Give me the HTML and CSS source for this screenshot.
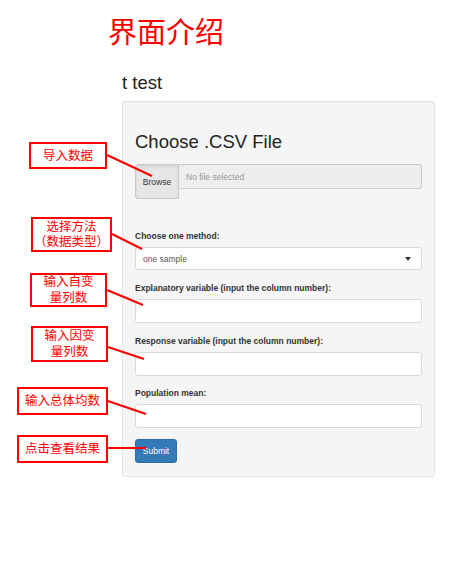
FILE: index.html
```html
<!DOCTYPE html>
<html lang="zh">
<head>
<meta charset="utf-8">
<title>界面介绍</title>
<link rel="stylesheet" href="styles.css">
</head>
<body>
<div class="page">
  <h1 class="intro-title">界面介绍</h1>
  <div class="app">
    <h2 class="app-title">t test</h2>
    <div class="well">
      <h2 class="well-title">Choose .CSV File</h2>
      <div class="file-row">
        <span class="browse">Browse</span>
        <span class="file-name">No file selected</span>
      </div>
      <div class="group first">
        <div class="label">Choose one method:</div>
        <div class="select"><span>one sample</span><span class="caret"></span></div>
      </div>
      <div class="group">
        <div class="label">Explanatory variable (input the column number):</div>
        <div class="input"></div>
      </div>
      <div class="group">
        <div class="label">Response variable (input the column number):</div>
        <div class="input"></div>
      </div>
      <div class="group tight">
        <div class="label">Population mean:</div>
        <div class="input"></div>
      </div>
      <div class="submit">Submit</div>
    </div>
  </div>

  <svg class="lines" width="454" height="567" viewBox="0 0 454 567">
    <g stroke="#ff0000" stroke-width="2" stroke-linecap="butt">
      <line x1="107" y1="155" x2="152" y2="176"/>
      <line x1="112" y1="234" x2="142" y2="249"/>
      <line x1="107" y1="290" x2="143" y2="305"/>
      <line x1="108" y1="347" x2="144" y2="359"/>
      <line x1="108" y1="401" x2="146" y2="414"/>
      <line x1="108" y1="448" x2="146" y2="448"/>
    </g>
  </svg>

  <div class="note n1">导入数据</div>
  <div class="note n2"><span>选择方法</span><span>（数据类型）</span></div>
  <div class="note n3"><span>输入自变</span><span>量列数</span></div>
  <div class="note n4"><span>输入因变</span><span>量列数</span></div>
  <div class="note n5">输入总体均数</div>
  <div class="note n6">点击查看结果</div>
</div>
</body>
</html>
```
FILE: styles.css
```css
html, body {
  margin: 0;
  padding: 0;
  background: #ffffff;
}

.page {
  position: relative;
  width: 454px;
  height: 567px;
  overflow: hidden;
  font-family: "Liberation Sans", Arial, sans-serif;
  color: #333333;
}

.intro-title {
  margin: 0;
  padding: 16px 0 0 108px;
  font-family: "Noto Sans CJK SC", sans-serif;
  font-weight: 400;
  font-size: 29px;
  line-height: 29px;
  color: #ff0000;
}

.app {
  margin: 28px 0 0 122px;
  width: 313px;
}

.app-title {
  margin: 0 0 8px 0;
  font-size: 18.5px;
  line-height: 20px;
  font-weight: 400;
  color: #222222;
}

.well {
  background: #f5f5f5;
  border: 1px solid #e3e3e3;
  border-radius: 3px;
  padding: 12px 12px 13px 12px;
  box-shadow: inset 0 1px 1px rgba(0,0,0,0.03);
}

.well-title {
  margin: 18px 0 0 0;
  font-size: 18.5px;
  line-height: 20px;
  font-weight: 400;
  color: #222222;
}

.file-row {
  display: flex;
  align-items: flex-start;
  margin-top: 12px;
}

.browse {
  box-sizing: border-box;
  width: 44px;
  height: 35px;
  display: flex;
  align-items: center;
  justify-content: center;
  background: #e6e6e6;
  border: 1px solid #c8c8c8;
  border-radius: 3px 0 0 3px;
  font-size: 8.5px;
  color: #333333;
  box-shadow: inset 0 2px 3px rgba(0,0,0,0.08);
}

.file-name {
  box-sizing: border-box;
  flex: 1;
  height: 25px;
  display: flex;
  align-items: center;
  padding-left: 7px;
  background: #eeeeee;
  border: 1px solid #cccccc;
  border-left: none;
  border-radius: 0 3px 3px 0;
  font-size: 8.5px;
  color: #999999;
}

.group {
  margin-top: 13px;
}

.group.first {
  margin-top: 32px;
}

.group.tight {
  margin-top: 12px;
}

.label {
  font-size: 8.5px;
  line-height: 11px;
  font-weight: 700;
  color: #333333;
  margin-bottom: 5px;
  white-space: nowrap;
}

.select,
.input {
  box-sizing: border-box;
  height: 24px;
  background: #ffffff;
  border: 1px solid #d9d9d9;
  border-radius: 3px;
}

.select {
  height: 23px;
  display: flex;
  align-items: center;
  justify-content: space-between;
  padding: 0 10px 0 7px;
  font-size: 8.5px;
  color: #555555;
}

.caret {
  width: 0;
  height: 0;
  border-left: 3.5px solid transparent;
  border-right: 3.5px solid transparent;
  border-top: 4px solid #333333;
}

.submit {
  box-sizing: border-box;
  margin-top: 11px;
  width: 42px;
  height: 24px;
  display: flex;
  align-items: center;
  justify-content: center;
  background: #337ab7;
  border: 1px solid #2e6da4;
  border-radius: 3px;
  font-size: 8.5px;
  color: #ffffff;
}

.lines {
  position: absolute;
  left: 0;
  top: 0;
  pointer-events: none;
}

.note {
  position: absolute;
  box-sizing: border-box;
  display: flex;
  flex-direction: column;
  align-items: center;
  justify-content: center;
  text-align: center;
  background: #ffffff;
  border: 2px solid #ff0000;
  font-family: "Liberation Sans", "Noto Sans CJK SC", sans-serif;
  font-size: 12.5px;
  line-height: 16px;
  color: #ff0000;
  white-space: nowrap;
}

.note span {
  display: block;
}

.n1 { left: 29px; top: 142px; width: 78px; height: 27px; }
.n2 { left: 31px; top: 217px; width: 81px; height: 35px; line-height: 15px; }
.n3 { left: 30px; top: 273px; width: 77px; height: 34px; }
.n4 { left: 31px; top: 326px; width: 77px; height: 36px; }
.n5 { left: 17px; top: 387px; width: 91px; height: 28px; }
.n6 { left: 17px; top: 435px; width: 91px; height: 28px; }
```
